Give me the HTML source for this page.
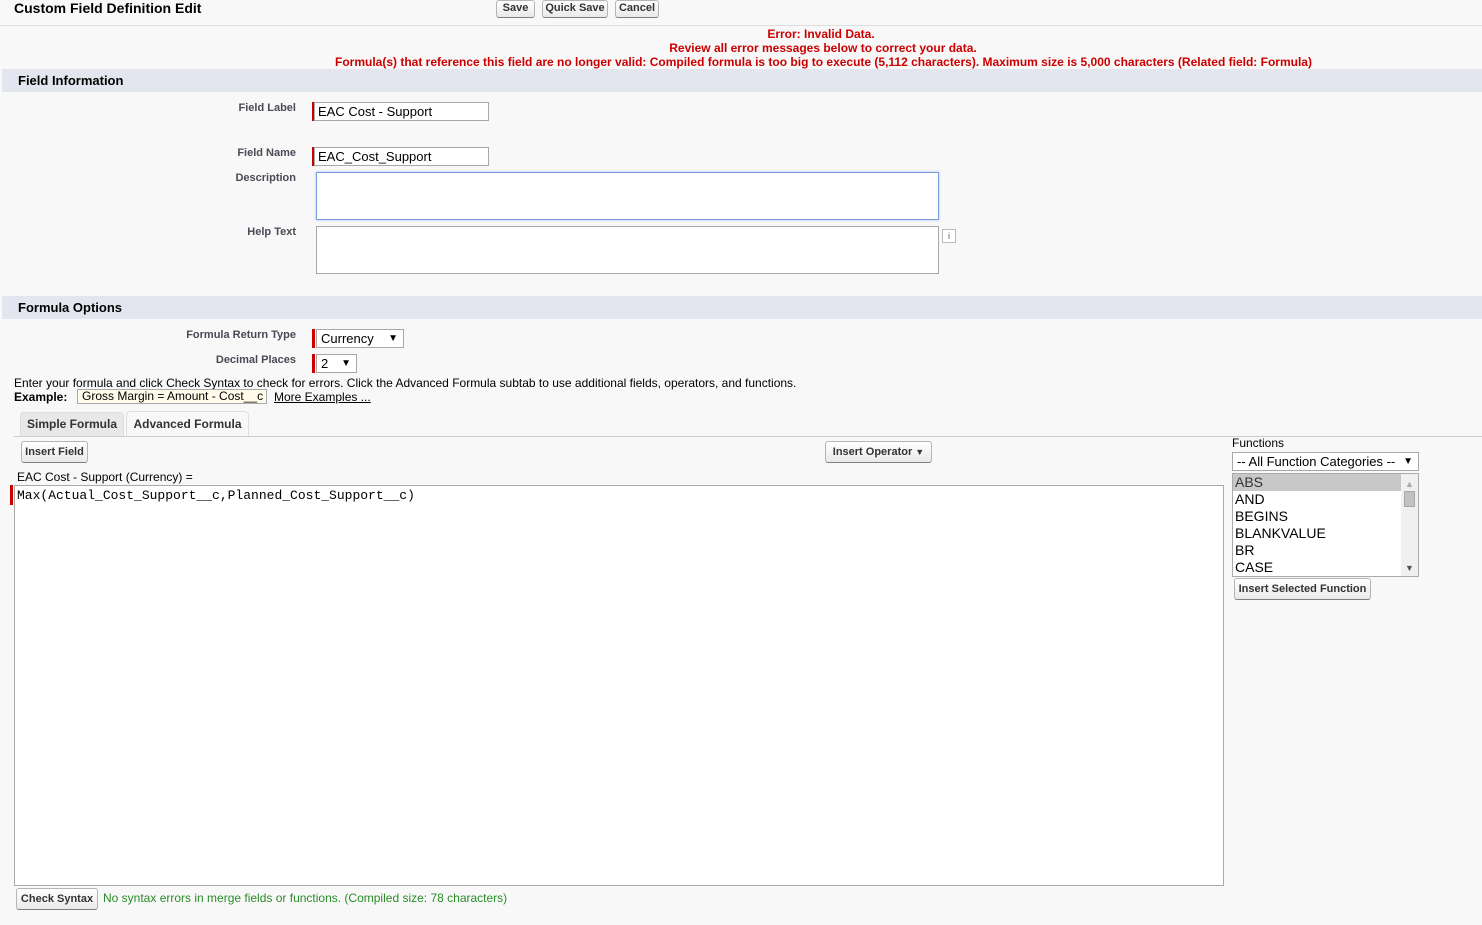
<!DOCTYPE html>
<html><head><style>
body{margin:0;width:1482px;height:925px;background:#f8f8f8;font-family:"Liberation Sans",Arial,sans-serif;position:relative;overflow:hidden;color:#000}
.a{position:absolute;white-space:nowrap}
.btn{position:absolute;border:1px solid #b5b5b5;border-bottom-color:#7f7f7f;border-radius:3px;background:linear-gradient(#fff,#e9e9e9);font-size:11px;font-weight:bold;color:#333;text-align:center;box-sizing:border-box}
.lbl{position:absolute;font-size:11px;font-weight:bold;color:#4a4a56;text-align:right;right:1186px}
.inp{position:absolute;background:#fff;border:1px solid #a8a8a8;box-sizing:border-box;font-size:13px;padding-left:4px}
.req{position:absolute;width:3px;background:#c00}
.sec{position:absolute;left:2px;right:0;height:23px;background:#e3e6ef;font-size:13px;font-weight:bold;color:#000}
.sec span{position:absolute;left:16px;top:4px}
.err{position:absolute;left:0;text-align:center;font-size:12px;color:#c00;font-weight:bold}
</style></head><body>
<div class="a" style="left:14px;top:0;font-size:14px;font-weight:bold;color:#000">Custom Field Definition Edit</div>
<div class="btn" style="left:496px;top:0;width:39px;height:18px;padding-top:1px">Save</div>
<div class="btn" style="left:542px;top:0;width:66px;height:18px;padding-top:1px">Quick Save</div>
<div class="btn" style="left:615px;top:0;width:44px;height:18px;padding-top:1px">Cancel</div>
<div class="a" style="left:0;top:25px;width:1482px;height:1px;background:#ddd"></div>
<div class="err" style="top:27px;width:1642px">Error: Invalid Data.</div>
<div class="err" style="top:41px;width:1646px">Review all error messages below to correct your data.</div>
<div class="a" style="left:335px;top:55px;font-size:12px;color:#c00;font-weight:bold">Formula(s) that reference this field are no longer valid: Compiled formula is too big to execute (5,112 characters). Maximum size is 5,000 characters (Related field: Formula)</div>
<div class="sec" style="top:69px"><span>Field Information</span></div>
<div class="lbl" style="top:102px">Field Label</div>
<div class="req" style="left:312px;top:102px;height:19px"></div>
<div class="inp" style="left:314px;top:102px;width:175px;height:19px;padding-left:3px;line-height:18px">EAC Cost - Support</div>
<div class="lbl" style="top:147px">Field Name</div>
<div class="req" style="left:312px;top:147px;height:19px"></div>
<div class="inp" style="left:314px;top:147px;width:175px;height:19px;padding-left:3px;line-height:18px">EAC_Cost_Support</div>
<div class="lbl" style="top:172px">Description</div>
<div class="inp" style="left:316px;top:172px;width:623px;height:48px;border:1px solid #7a9fe0;box-shadow:0 0 2px #9bbcf0"></div>
<div class="lbl" style="top:226px">Help Text</div>
<div class="inp" style="left:316px;top:226px;width:623px;height:48px"></div>
<div class="a" style="left:942px;top:229px;width:14px;height:14px;border:1px solid #bbb;background:#fff;font-size:9px;text-align:center;line-height:13px;box-sizing:border-box;color:#555">i</div>
<div class="sec" style="top:296px"><span>Formula Options</span></div>
<div class="lbl" style="top:329px">Formula Return Type</div>
<div class="req" style="left:312px;top:329px;height:19px"></div>
<div class="inp" style="left:316px;top:329px;width:88px;height:19px;line-height:18px;font-size:13px">Currency<span style="position:absolute;right:5px;font-size:10px">▼</span></div>
<div class="lbl" style="top:354px">Decimal Places</div>
<div class="req" style="left:312px;top:354px;height:19px"></div>
<div class="inp" style="left:316px;top:354px;width:41px;height:19px;line-height:18px;font-size:13px">2<span style="position:absolute;right:5px;font-size:10px">▼</span></div>
<div class="a" style="left:14px;top:376px;font-size:12px">Enter your formula and click Check Syntax to check for errors. Click the Advanced Formula subtab to use additional fields, operators, and functions.</div>
<div class="a" style="left:14px;top:390px;font-size:12px;font-weight:bold">Example:</div>
<div class="a" style="left:77px;top:389px;width:190px;height:15px;border:1px solid #aaa;background:#fffbea;font-size:12px;padding-left:4px;box-sizing:border-box;line-height:13px">Gross Margin = Amount - Cost__c</div>
<div class="a" style="left:274px;top:390px;font-size:12px;text-decoration:underline">More Examples ...</div>
<div class="a" style="left:20px;top:412px;width:104px;height:24px;background:#e8e8e8;border:1px solid #ddd;border-bottom:none;border-radius:4px 4px 0 0;font-size:12px;font-weight:bold;color:#333;text-align:center;line-height:23px;box-sizing:border-box">Simple Formula</div>
<div class="a" style="left:126px;top:411px;width:123px;height:26px;background:#f8f8f8;border:1px solid #ddd;border-bottom:none;border-radius:4px 4px 0 0;font-size:12px;font-weight:bold;color:#333;text-align:center;line-height:24px;box-sizing:border-box">Advanced Formula</div>
<div class="a" style="left:14px;top:436px;width:1468px;height:1px;background:#ccc"></div>
<div class="btn" style="left:21px;top:441px;width:67px;height:22px;line-height:20px">Insert Field</div>
<div class="btn" style="left:825px;top:441px;width:107px;height:22px;line-height:20px">Insert Operator <span style="font-size:9px">▼</span></div>
<div class="a" style="left:17px;top:470px;font-size:12px">EAC Cost - Support (Currency) =</div>
<div class="req" style="left:10px;top:485px;height:20px"></div>
<div class="a" style="left:14px;top:485px;width:1210px;height:401px;background:#fff;border:1px solid #aaa;box-sizing:border-box;font-family:'Liberation Mono',monospace;font-size:13px;padding:2px 2px">Max(Actual_Cost_Support__c,Planned_Cost_Support__c)</div>
<div class="a" style="left:1232px;top:436px;font-size:12px">Functions</div>
<div class="inp" style="left:1232px;top:452px;width:187px;height:19px;font-size:13px;line-height:18px">-- All Function Categories --<span style="position:absolute;right:5px;font-size:10px">▼</span></div>
<div class="a" style="left:1232px;top:473px;width:187px;height:104px;background:#fff;border:1px solid #aaa;box-sizing:border-box;font-size:14px;line-height:17px">
<div style="background:#c8c8c8;color:#333;padding-left:2px;width:166px">ABS</div>
<div style="padding-left:2px">AND</div><div style="padding-left:2px">BEGINS</div><div style="padding-left:2px">BLANKVALUE</div><div style="padding-left:2px">BR</div><div style="padding-left:2px">CASE</div>
<div style="position:absolute;right:0;top:0;width:17px;height:102px;background:#f0f0f0"><div style="position:absolute;left:3px;top:17px;width:11px;height:16px;background:#c1c1c1;border:1px solid #a8a8a8;box-sizing:border-box"></div><div style="position:absolute;left:4px;top:2px;font-size:9px;color:#aaa">▲</div><div style="position:absolute;left:4px;top:86px;font-size:9px;color:#555">▼</div></div>
</div>
<div class="btn" style="left:1234px;top:578px;width:137px;height:22px;line-height:20px">Insert Selected Function</div>
<div class="btn" style="left:16px;top:888px;width:82px;height:22px;line-height:20px">Check Syntax</div>
<div class="a" style="left:103px;top:891px;font-size:12px;color:#2a8c2a">No syntax errors in merge fields or functions. (Compiled size: 78 characters)</div>
</body></html>
